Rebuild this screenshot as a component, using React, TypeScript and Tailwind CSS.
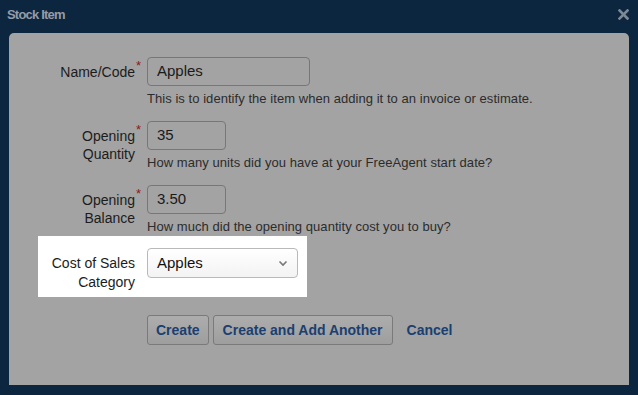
import React from "react";

function Req() {
  return <span className="w-[12px] shrink-0 text-[#8b1a1a] text-[13px] leading-none pt-[2px] pl-[1px]">*</span>;
}

function Row({ label, help, width, last, children }: { label: string[]; help: string; width: string; last?: boolean; children?: React.ReactNode }) {
  return (
    <div className={last ? "flex" : "flex mb-[13px]"}>
      <div className="w-[126px] shrink-0 text-right pt-[6px] text-[14px] leading-[18px] text-[#1c1c1c]">
        {label.map((l) => (
          <div key={l}>{l}</div>
        ))}
      </div>
      <Req />
      <div className="flex flex-col">
        <div className={`${width} h-[29px] border border-[#777] rounded-[4px] flex items-center pl-[9px] text-[15px] text-[#1a1a1a]`}>
          {children}
        </div>
        <div className="mt-[4px] text-[13px] tracking-[0.05px] leading-[18px] text-[#2c2c2c]">{help}</div>
      </div>
    </div>
  );
}

export default function App() {
  return (
    <div className="w-[638px] h-[395px] bg-[#0d2640] flex flex-col font-['Liberation_Sans',Arial,sans-serif] overflow-hidden">
      <div className="h-[33px] flex items-center justify-between pl-[7px] pr-[9px] pb-[4px]">
        <span className="text-[13px] font-bold text-[#939ca6] tracking-[-0.8px]">Stock Item</span>
        <svg width="11" height="11" viewBox="0 0 11 11">
          <path d="M1.5 1.5 L9.5 9.5 M9.5 1.5 L1.5 9.5" stroke="#7d8995" strokeWidth="2.6" strokeLinecap="square" />
        </svg>
      </div>
      <div className="ml-[9px] w-[620px] h-[352px] bg-[#a3a3a3] rounded-t-[5px] pt-[24px]">
        <Row label={["Name/Code"]} help="This is to identify the item when adding it to an invoice or estimate." width="w-[163px]">
          Apples
        </Row>
        <Row label={["Opening", "Quantity"]} help="How many units did you have at your FreeAgent start date?" width="w-[79px]">
          35
        </Row>
        <Row label={["Opening", "Balance"]} help="How much did the opening quantity cost you to buy?" width="w-[79px]" last>
          3.50
        </Row>
        <div className="ml-[29px] w-[269px] h-[61px] bg-white flex pt-[12px]">
          <div className="w-[97px] shrink-0 text-right pt-[6px] text-[14px] leading-[19px] text-[#1c1c1c]">
            <div>Cost of Sales</div>
            <div>Category</div>
          </div>
          <div className="w-[12px] shrink-0" />
          <div className="w-[151px] h-[30px] border border-[#b9b9b9] rounded-[4px] bg-gradient-to-b from-white to-[#f3f3f3] flex items-center justify-between pl-[9px] pr-[9px] text-[15px] text-[#111]">
            <span>Apples</span>
            <svg width="10" height="7" viewBox="0 0 10 7">
              <path d="M1.5 1.5 L5 5 L8.5 1.5" stroke="#777" strokeWidth="1.6" fill="none" />
            </svg>
          </div>
        </div>
        <div className="flex items-center mt-[18px] ml-[138px] gap-[4px] text-[14px] font-bold text-[#1b3f70]">
          <div className="h-[30px] px-[8px] flex items-center border border-[#7a7a7a] rounded-[3px] bg-gradient-to-b from-[#adadad] to-[#9e9e9e]">Create</div>
          <div className="h-[30px] px-[9px] flex items-center border border-[#7a7a7a] rounded-[3px] bg-gradient-to-b from-[#adadad] to-[#9e9e9e]">Create and Add Another</div>
          <span className="ml-[10px]">Cancel</span>
        </div>
      </div>
    </div>
  );
}
